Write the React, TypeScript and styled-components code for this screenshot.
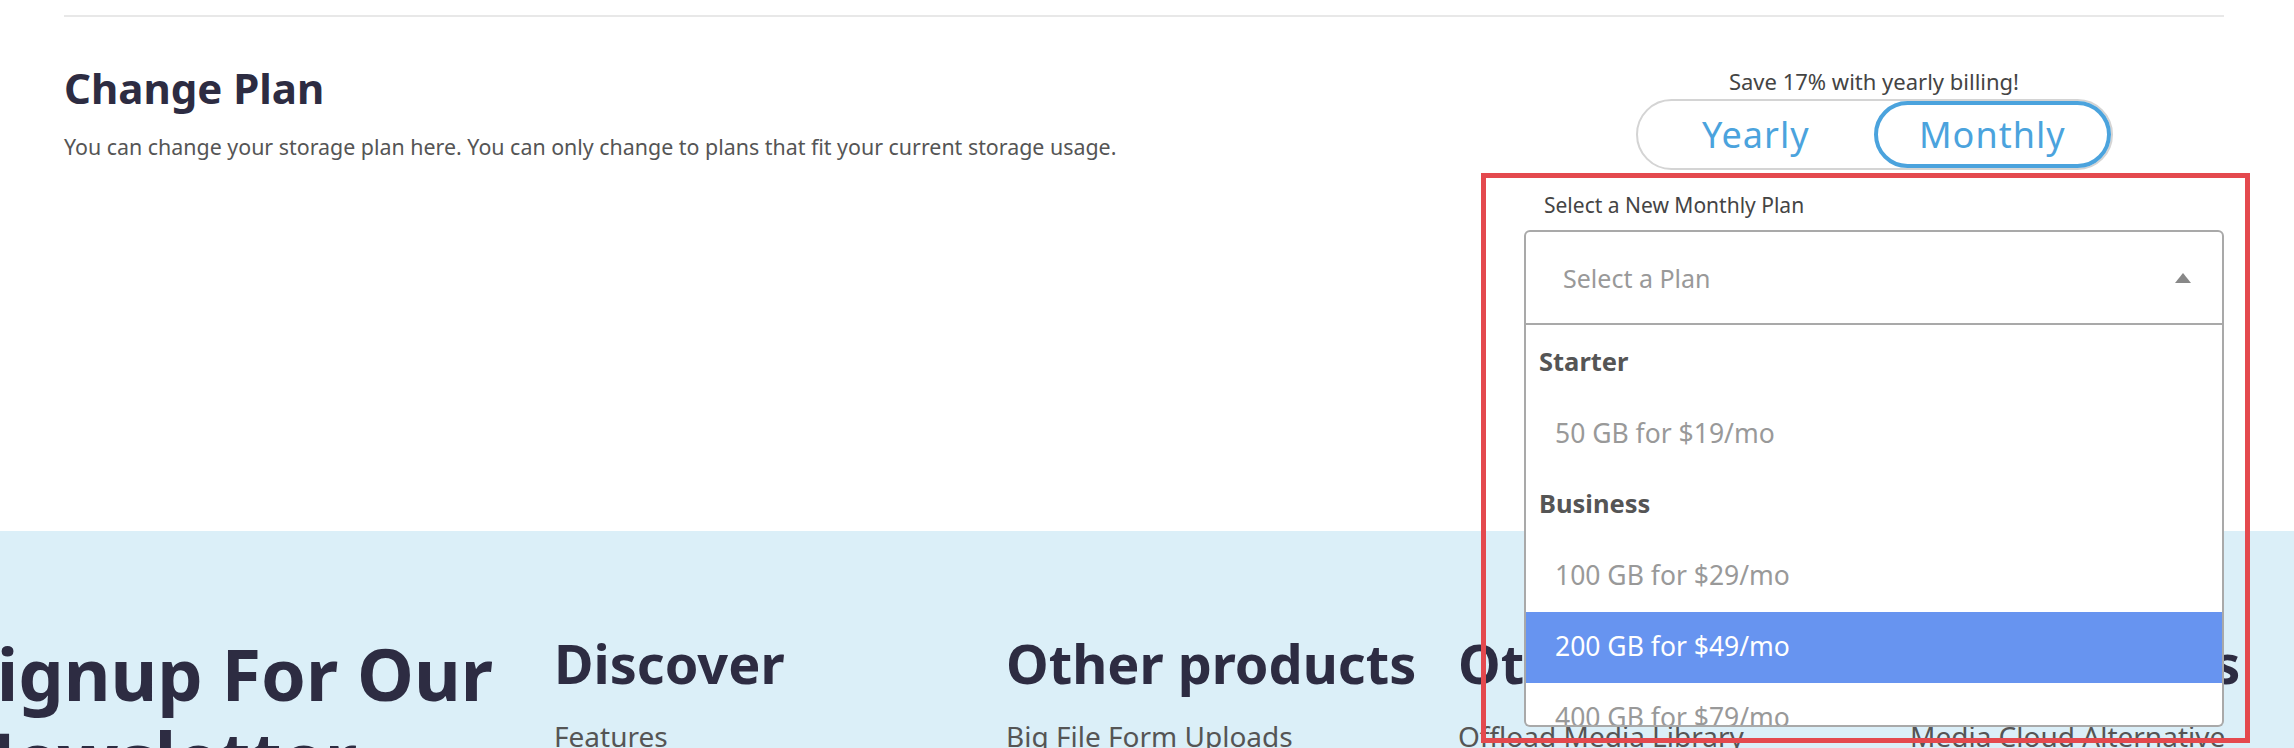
import styled, { createGlobalStyle } from "styled-components";

const GlobalStyle = createGlobalStyle`
  body {
    margin: 0;
    font-family: "Noto Sans", "Open Sans", sans-serif;
    background: #ffffff;
  }
  * {
    box-sizing: border-box;
  }
`;

const Page = styled.div`
  position: relative;
  width: 100%;
  height: 748px;
  overflow: hidden;
`;

const PlanSection = styled.section`
  height: 531px;
  padding: 15px 70px 0 64px;
`;

const Divider = styled.hr`
  margin: 0;
  border: 0;
  height: 2px;
  background: #e8e8e8;
`;

const PlanRow = styled.div`
  display: flex;
  justify-content: space-between;
  align-items: flex-start;
  margin-top: 43px;
`;

const Intro = styled.div`
  display: flex;
  flex-direction: column;
  padding-top: 3px;
`;

const Title = styled.h2`
  margin: 0;
  font-size: 42px;
  line-height: 1.2;
  font-weight: 700;
  color: #2d2c42;
`;

const Description = styled.p`
  margin: 18px 0 0;
  font-size: 21.4px;
  line-height: 1.5;
  color: #555;
`;

const PlanPicker = styled.div`
  width: 700px;
  padding-top: 6px;
  display: flex;
  flex-direction: column;
  align-items: center;
`;

const SaveNote = styled.div`
  font-size: 22px;
  line-height: 1.4;
  color: #444;
`;

const Toggle = styled.div`
  margin-top: 2px;
  display: flex;
  width: 477px;
  height: 71px;
  border: 2px solid #d4d4d4;
  border-radius: 36px;
`;

const ToggleOption = styled.button<{ $active?: boolean }>`
  flex: 1;
  display: flex;
  align-items: center;
  justify-content: center;
  padding: 0;
  background: none;
  border: 4px solid ${(p) => (p.$active ? "#4ba3dd" : "transparent")};
  border-radius: 34px;
  font-family: inherit;
  font-size: 36px;
  letter-spacing: 1px;
  color: #4ba3dd;
`;

const FieldLabel = styled.div`
  align-self: stretch;
  margin-top: 21px;
  padding-left: 20px;
  font-size: 21px;
  line-height: 1.4;
  color: #444;
`;

const SelectBox = styled.div`
  position: relative;
  align-self: stretch;
  margin-top: 10px;
`;

const SelectControl = styled.div`
  height: 95px;
  display: flex;
  align-items: center;
  justify-content: space-between;
  padding: 0 31px 0 37px;
  border: 2px solid #a9a9a9;
  border-radius: 6px 6px 0 0;
`;

const Placeholder = styled.span`
  font-size: 25px;
  color: #999;
`;

const Caret = styled.span`
  width: 0;
  height: 0;
  border-left: 8px solid transparent;
  border-right: 8px solid transparent;
  border-bottom: 10px solid #888;
`;

const Menu = styled.div`
  position: absolute;
  top: 100%;
  left: 0;
  right: 0;
  height: 402px;
  padding-top: 3px;
  background: #fff;
  border: 2px solid #a9a9a9;
  border-top: none;
  border-radius: 0 0 6px 6px;
  overflow: hidden;
  z-index: 2;
`;

const GroupHeading = styled.div`
  height: 71px;
  display: flex;
  align-items: center;
  padding: 0 0 5px 13px;
  font-size: 25.5px;
  font-weight: 700;
  color: #555;
`;

const Option = styled.div<{ $selected?: boolean }>`
  height: 71px;
  display: flex;
  align-items: center;
  padding: 0 0 4px 29px;
  font-size: 26.5px;
  color: ${(p) => (p.$selected ? "#fff" : "#999")};
  background: ${(p) => (p.$selected ? "#6794f0" : "transparent")};
`;

const Highlight = styled.div`
  position: absolute;
  left: 1481px;
  top: 173px;
  width: 769px;
  height: 570px;
  border: 5px solid #e4494e;
  pointer-events: none;
  z-index: 3;
`;

const Footer = styled.footer`
  height: 400px;
  padding-top: 100px;
  background: #dbeff8;
`;

const FooterGrid = styled.div`
  display: grid;
  grid-template-columns: 597px repeat(3, 452px) 1fr;
  margin-left: -43px;
`;

const NewsletterTitle = styled.h2`
  width: 560px;
  margin: 0;
  font-size: 72px;
  line-height: 84px;
  font-weight: 700;
  color: #2d2c42;
`;

const ColumnTitle = styled.h3`
  margin: 0;
  font-size: 54px;
  line-height: 1.2;
  font-weight: 700;
  color: #2d2c42;
  white-space: nowrap;
`;

const LinkList = styled.ul`
  margin: 19px 0 0;
  padding: 0;
  list-style: none;

  li {
    font-size: 28px;
    line-height: 1.5;
    color: #555;
    white-space: nowrap;
  }
`;

const plans = [
  { group: "Starter", options: ["50 GB for $19/mo"] },
  {
    group: "Business",
    options: ["100 GB for $29/mo", "200 GB for $49/mo", "400 GB for $79/mo"],
  },
];

const footerColumns = [
  { title: "Discover", links: ["Features", "Pricing"] },
  { title: "Other products", links: ["Big File Form Uploads", "WordPress"] },
  { title: "Other tools", links: ["Offload Media Library", "Direct Uploads"] },
  { title: "Alternatives", links: ["Media Cloud Alternative", "S3 Alternative"] },
];

const App = () => {
  return (
    <Page>
      <GlobalStyle />
      <PlanSection>
        <Divider />
        <PlanRow>
          <Intro>
            <Title>Change Plan</Title>
            <Description>
              You can change your storage plan here. You can only change to
              plans that fit your current storage usage.
            </Description>
          </Intro>
          <PlanPicker>
            <SaveNote>Save 17% with yearly billing!</SaveNote>
            <Toggle>
              <ToggleOption>Yearly</ToggleOption>
              <ToggleOption $active>Monthly</ToggleOption>
            </Toggle>
            <FieldLabel>Select a New Monthly Plan</FieldLabel>
            <SelectBox>
              <SelectControl>
                <Placeholder>Select a Plan</Placeholder>
                <Caret />
              </SelectControl>
              <Menu>
                {plans.map((g) => (
                  <div key={g.group}>
                    <GroupHeading>{g.group}</GroupHeading>
                    {g.options.map((o) => (
                      <Option key={o} $selected={o.startsWith("200")}>
                        {o}
                      </Option>
                    ))}
                  </div>
                ))}
              </Menu>
            </SelectBox>
          </PlanPicker>
        </PlanRow>
      </PlanSection>
      <Footer>
        <FooterGrid>
          <NewsletterTitle>Signup For Our Newsletter</NewsletterTitle>
          {footerColumns.map((c) => (
            <div key={c.title}>
              <ColumnTitle>{c.title}</ColumnTitle>
              <LinkList>
                {c.links.map((l) => (
                  <li key={l}>{l}</li>
                ))}
              </LinkList>
            </div>
          ))}
        </FooterGrid>
      </Footer>
      <Highlight />
    </Page>
  );
};

export default App;
